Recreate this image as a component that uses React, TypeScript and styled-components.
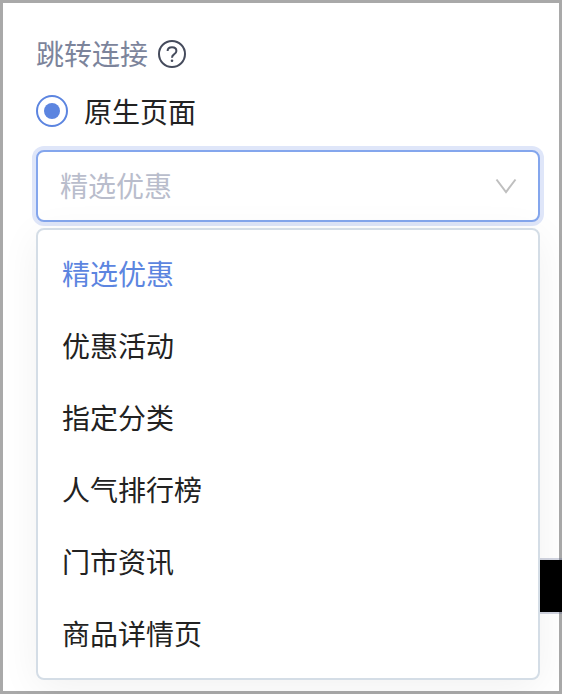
import React, { useState } from "react";
import styled, { createGlobalStyle } from "styled-components";

const GlobalStyle = createGlobalStyle`
  *, *::before, *::after { box-sizing: border-box; }
  body {
    margin: 0;
    background: #fff;
    font-family: "Noto Sans CJK SC", "Noto Sans", sans-serif;
    font-size: 28px;
    line-height: 44px;
    color: #222;
  }
`;

const Viewport = styled.div`
  overflow: hidden;
`;

const Page = styled.main`
  min-height: 100vh;
  padding: 29px 19px 11px 33px;
  border: 3px solid #a9a9a9;
  background: #fff;
`;

const FieldHeader = styled.div`
  display: flex;
  align-items: center;
  gap: 10px;
  color: #7c849b;
`;

const FieldTitle = styled.span`
  padding-bottom: 2px;
  line-height: 42px;
`;

const HelpButton = styled.button`
  display: flex;
  padding: 0;
  border: 0;
  background: none;
  color: #454b5c;
  cursor: pointer;
`;

const RadioLabel = styled.label`
  display: flex;
  align-items: center;
  gap: 16px;
  margin: 13px 0 17px;
`;

const Radio = styled.input`
  appearance: none;
  display: grid;
  place-items: center;
  width: 32px;
  height: 32px;
  margin: 0;
  border: 2px solid #5c85e0;
  border-radius: 50%;
  background: #fff;

  &:checked::before {
    content: "";
    width: 16px;
    height: 16px;
    border-radius: 50%;
    background: #5c85e0;
  }
`;

const SelectBox = styled.div`
  display: grid;
  align-items: center;
  height: 72px;
  border: 2px solid #84a6ed;
  border-radius: 8px;
  background: #fff;
  box-shadow: 0 0 0 4px #dfe6f9;
`;

const Select = styled.select`
  grid-area: 1 / 1;
  appearance: none;
  width: 100%;
  height: 100%;
  padding: 0 60px 2px 22px;
  border: 0;
  outline: 0;
  background: transparent;
  color: #b9bdcc;
  font: inherit;
`;

const Chevron = styled.svg`
  grid-area: 1 / 1;
  justify-self: end;
  margin-right: 21px;
  pointer-events: none;
`;

const MenuArea = styled.div`
  position: relative;
  margin-top: 6px;
`;

const Menu = styled.ul`
  position: relative;
  margin: 0;
  padding: 8px 0;
  border: 2px solid #d4dde6;
  border-radius: 8px;
  background: #fff;
  box-shadow: 0 8px 40px rgba(0, 0, 0, 0.06);
  list-style: none;
`;

const Option = styled.button<{ $active: boolean }>`
  display: block;
  width: 100%;
  height: 72px;
  padding: 0 24px 2px;
  border: 0;
  background: none;
  color: ${({ $active }) => ($active ? "#5c85e0" : "#222")};
  font: inherit;
  text-align: left;
  cursor: pointer;
`;

const EdgeBlock = styled.div`
  position: absolute;
  right: -22px;
  bottom: 66px;
  width: 22px;
  height: 56px;
  border: solid rgba(90, 100, 145, 0.28);
  border-width: 2px 0;
  background: #000;
  background-clip: padding-box;
`;

const OPTIONS = ["精选优惠", "优惠活动", "指定分类", "人气排行榜", "门市资讯", "商品详情页"];

export default function App() {
  const [value, setValue] = useState(OPTIONS[0]);

  return (
    <Viewport>
      <GlobalStyle />
      <Page>
        <FieldHeader>
          <FieldTitle>跳转连接</FieldTitle>
          <HelpButton type="button" aria-label="帮助">
            <svg width="28" height="28" viewBox="0 0 28 28" fill="none" stroke="currentColor" strokeWidth="2">
              <circle cx="14" cy="14" r="13" />
              <path d="M9.6 11C9.6 8.7 11.4 7.3 14 7.3s4.4 1.5 4.4 3.6c0 1.8-1.2 2.7-2.4 3.4-1.3.8-2 1.5-2 3.5" />
              <circle cx="14" cy="20.8" r="1.3" fill="currentColor" stroke="none" />
            </svg>
          </HelpButton>
        </FieldHeader>
        <RadioLabel>
          <Radio type="radio" name="link-type" defaultChecked />
          <span>原生页面</span>
        </RadioLabel>
        <SelectBox>
          <Select aria-label="原生页面" value={value} onChange={(e) => setValue(e.target.value)}>
            {OPTIONS.map((o) => (
              <option key={o}>{o}</option>
            ))}
          </Select>
          <Chevron width="22" height="16" viewBox="0 0 22 16" fill="none" stroke="#bfbfbf" strokeWidth="2">
            <path d="M1.5 1.5 11 14 20.5 1.5" />
          </Chevron>
        </SelectBox>
        <MenuArea>
          <EdgeBlock />
          <Menu>
            {OPTIONS.map((o) => (
              <li key={o}>
                <Option type="button" $active={o === value} onClick={() => setValue(o)}>
                  {o}
                </Option>
              </li>
            ))}
          </Menu>
        </MenuArea>
      </Page>
    </Viewport>
  );
}
